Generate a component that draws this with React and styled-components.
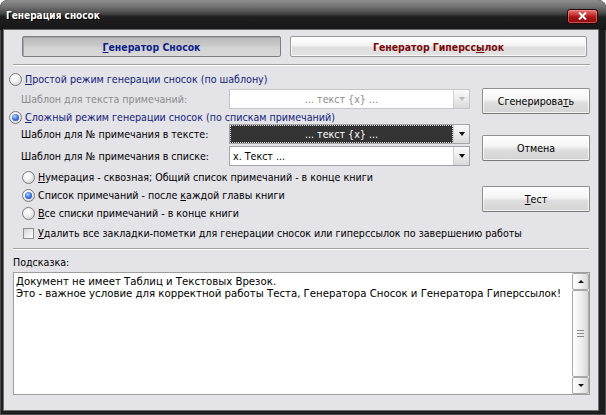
import React from 'react';
import styled, { createGlobalStyle } from 'styled-components';

const Global = createGlobalStyle`
  html, body { margin: 0; padding: 0; background: #ffffff; }
  body {
    font-family: "DejaVu Sans Condensed", "DejaVu Sans", "Liberation Sans", sans-serif;
    font-size: 10.6px;
    color: #000;
  }
  * { box-sizing: border-box; }
`;

const Window = styled.div`
  width: 606px;
  height: 415px;
  display: flex;
  flex-direction: column;
  background: #1d1d1d;
  border-radius: 8px 8px 0 0;
  overflow: hidden;
  box-shadow: inset 0 0 0 1px #4a4a4a;
`;

const TitleBar = styled.div`
  height: 30px;
  flex: none;
  display: flex;
  align-items: center;
  justify-content: space-between;
  padding: 0 8px 0 6px;
  background: linear-gradient(to bottom, #8e8e8e 0%, #727272 22%, #454545 45%, #1f1f1f 56%, #161616 100%);
`;

const TitleText = styled.div`
  color: #ffffff;
  font-weight: bold;
  font-size: 10px;
  text-shadow: 1px 1px 0 #000;
  margin-top: 1px;
`;

const CloseButton = styled.div`
  width: 31px;
  height: 15px;
  margin-top: 2px;
  border-radius: 3px;
  border: 1px solid #2a0000;
  background: linear-gradient(to bottom, #e77a7a 0%, #c93a3a 35%, #a81515 55%, #8e0d0d 100%);
  box-shadow: inset 0 0 0 1px rgba(255, 170, 170, 0.45);
  display: flex;
  align-items: center;
  justify-content: center;
`;

const Frame = styled.div`
  flex: 1;
  display: flex;
  padding: 0 8px 5px 4px;
`;

const Client = styled.div`
  flex: 1;
  display: flex;
  flex-direction: column;
  background: #e4e3e8;
  box-shadow: 0 0 0 1px #6c6c6c;
`;

const TopRow = styled.div`
  display: flex;
  gap: 9px;
  margin: 6px 0 0 18px;
`;

const TabButton = styled.div`
  width: ${p => p.$w}px;
  height: 21px;
  display: flex;
  align-items: center;
  justify-content: center;
  font-weight: bold;
  font-size: 10.4px;
  color: ${p => p.$color};
  border: 1px solid ${p => (p.$pressed ? '#7e7e7e' : '#9a9a9a')};
  border-radius: 2px;
  background: ${p =>
    p.$pressed
      ? 'linear-gradient(to bottom, #b9b9b9 0%, #c9c9c9 45%, #d3d3d3 55%, #d9d9d9 100%)'
      : 'linear-gradient(to bottom, #ffffff 0%, #f3f3f3 45%, #dedede 55%, #e3e3e3 100%)'};
  box-shadow: ${p => (p.$pressed ? 'inset 1px 1px 0 #a4a4a4' : 'inset 0 0 0 1px rgba(255,255,255,0.7)')};
`;

const Separator = styled.div`
  height: 2px;
  width: ${p => p.$w}px;
  margin: ${p => p.$mt}px 0 0 9px;
  border-top: 1px solid #a3a3a3;
  border-bottom: 1px solid #ffffff;
`;

const Main = styled.div`
  display: flex;
`;

const LeftCol = styled.div`
  width: 478px;
  display: flex;
  flex-direction: column;
`;

const RightCol = styled.div`
  width: 108px;
  display: flex;
  flex-direction: column;
`;

const RadioRow = styled.div`
  display: flex;
  align-items: center;
  height: ${p => p.$h}px;
  margin-top: ${p => p.$mt}px;
  padding-left: ${p => p.$pl}px;
  gap: 3px;
  color: ${p => p.$color || '#000'};
  white-space: nowrap;
`;

const RadioCircle = styled.span`
  width: 13px;
  height: 13px;
  flex: none;
  border-radius: 50%;
  border: 1px solid #7c7c7c;
  background: radial-gradient(circle at 40% 35%, #ffffff 0%, #f2f2f2 40%, #c4c4c4 100%);
  display: flex;
  align-items: center;
  justify-content: center;
  &::after {
    content: '';
    width: 7px;
    height: 7px;
    border-radius: 50%;
    background: radial-gradient(circle at 40% 35%, #b4d0ff 0%, #3d74da 50%, #1a43a6 100%);
    display: ${p => (p.$checked ? 'block' : 'none')};
  }
`;

const CheckBox = styled.span`
  width: 11px;
  height: 11px;
  flex: none;
  border: 1px solid #8e8e8e;
  background: linear-gradient(135deg, #d2d2d2 0%, #f4f4f4 70%, #ffffff 100%);
  margin-right: 1px;
`;

const Key = styled.span`
  text-decoration: underline;
  text-underline-offset: 1px;
`;

const FieldRow = styled.div`
  display: flex;
  align-items: center;
  height: 20px;
  margin-top: ${p => p.$mt}px;
  padding-left: 17px;
`;

const FieldLabel = styled.div`
  width: 208px;
  color: ${p => (p.$disabled ? '#8c8c8c' : '#000')};
  white-space: nowrap;
`;

const Combo = styled.div`
  width: 241px;
  height: 20px;
  display: flex;
  background: #ffffff;
  border: 1px solid ${p => (p.$disabled ? '#c6c6c6' : '#a4a4a4')};
`;

const ComboText = styled.div`
  flex: 1;
  display: flex;
  align-items: center;
  justify-content: ${p => (p.$left ? 'flex-start' : 'center')};
  padding-left: ${p => (p.$left ? '2px' : '0')};
  color: ${p => (p.$focused ? '#ffffff' : p.$disabled ? '#8c8c8c' : '#000')};
  background: ${p => (p.$focused ? '#343434' : 'transparent')};
  border: 1px ${p => (p.$focused ? 'dotted #d8d8d8' : 'solid transparent')};
  white-space: nowrap;
`;

const ComboArrow = styled.div`
  width: 16px;
  flex: none;
  display: flex;
  align-items: center;
  justify-content: center;
  border-left: 1px solid #d0d0d0;
  background: linear-gradient(to bottom, #fafafa 0%, #ececec 50%, #d9d9d9 100%);
  &::after {
    content: '';
    border-left: 3.5px solid transparent;
    border-right: 3.5px solid transparent;
    border-top: 4px solid ${p => (p.$disabled ? '#b9b9b9' : '#111')};
  }
`;

const Button = styled.div`
  width: 108px;
  height: 26px;
  margin-top: ${p => p.$mt}px;
  display: flex;
  align-items: center;
  justify-content: center;
  border: 1px solid #8f8f8f;
  border-bottom-color: #7a7a7a;
  border-radius: 2px;
  background: linear-gradient(to bottom, #ffffff 0%, #f5f5f5 42%, #dedede 58%, #d4d4d4 100%);
  box-shadow: inset 0 0 0 1px rgba(255, 255, 255, 0.7);
  color: #000;
`;

const HintLabel = styled.div`
  height: 13px;
  line-height: 13px;
  margin-top: 6px;
  padding-left: 9px;
`;

const Memo = styled.div`
  width: 577px;
  height: 123px;
  margin: 3px 0 0 9px;
  display: flex;
  background: #ffffff;
  border: 1px solid #9d9d9d;
`;

const MemoText = styled.div`
  flex: 1;
  padding: 3px 0 0 2px;
  font-size: 11.3px;
  line-height: 12px;
  white-space: nowrap;
  overflow: hidden;
`;

const ScrollBar = styled.div`
  width: 17px;
  display: flex;
  flex-direction: column;
  background: #f0f0f0;
`;

const ScrollButton = styled.div`
  height: 17px;
  flex: none;
  display: flex;
  align-items: center;
  justify-content: center;
  border: 1px solid #a9a9a9;
  border-radius: 2px;
  background: linear-gradient(to right, #ffffff 0%, #ececec 60%, #d6d6d6 100%);
  &::after {
    content: '';
    border-left: 3px solid transparent;
    border-right: 3px solid transparent;
    ${p => (p.$up ? 'border-bottom: 3px solid #111;' : 'border-top: 3px solid #111;')}
  }
`;

const ScrollThumb = styled.div`
  flex: 1;
  display: flex;
  flex-direction: column;
  align-items: center;
  justify-content: center;
  gap: 2px;
  border: 1px solid #a9a9a9;
  border-radius: 2px;
  background: linear-gradient(to right, #ffffff 0%, #ececec 60%, #d6d6d6 100%);
`;

const Grip = styled.span`
  width: 7px;
  height: 1px;
  background: #8a8a8a;
`;

export default function App() {
  return (
    <>
      <Global />
      <Window>
        <TitleBar>
          <TitleText>Генерация сносок</TitleText>
          <CloseButton>
            <svg width="9" height="8" viewBox="0 0 9 8">
              <path d="M1 0.5 L8 7.5 M8 0.5 L1 7.5" stroke="#ffffff" strokeWidth="2" />
            </svg>
          </CloseButton>
        </TitleBar>
        <Frame>
          <Client>
            <TopRow>
              <TabButton $w={259} $pressed $color="#0c1e8a">
                <Key>Г</Key>енератор Сносок
              </TabButton>
              <TabButton $w={297} $color="#7c0a0a">
                Генератор Гиперсс<Key>ы</Key>лок
              </TabButton>
            </TopRow>
            <Separator $w={577} $mt={7} />
            <Main>
              <LeftCol>
                <RadioRow $h={14} $mt={6} $pl={5} $color="#12237a">
                  <RadioCircle />
                  <span><Key>П</Key>ростой режим генерации сносок (по шаблону)</span>
                </RadioRow>
                <FieldRow $mt={3}>
                  <FieldLabel $disabled>Шаблон для текста примечаний:</FieldLabel>
                  <Combo $disabled>
                    <ComboText $disabled>... текст {'{x}'} ...</ComboText>
                    <ComboArrow $disabled />
                  </Combo>
                </FieldRow>
                <RadioRow $h={14} $mt={1} $pl={5} $color="#12237a">
                  <RadioCircle $checked />
                  <span><Key>С</Key>ложный режим генерации сносок (по спискам примечаний)</span>
                </RadioRow>
                <FieldRow $mt={0}>
                  <FieldLabel>Шаблон для № примечания в тексте:</FieldLabel>
                  <Combo>
                    <ComboText $focused>... текст {'{x}'} ...</ComboText>
                    <ComboArrow />
                  </Combo>
                </FieldRow>
                <FieldRow $mt={2}>
                  <FieldLabel>Шаблон для № примечания в списке:</FieldLabel>
                  <Combo>
                    <ComboText $left>x. Текст ...</ComboText>
                    <ComboArrow />
                  </Combo>
                </FieldRow>
                <RadioRow $h={18} $mt={2} $pl={18}>
                  <RadioCircle />
                  <span><Key>Н</Key>умерация - сквозная; Общий список примечаний - в конце книги</span>
                </RadioRow>
                <RadioRow $h={18} $mt={0} $pl={18}>
                  <RadioCircle $checked />
                  <span>Список примечаний - после <Key>к</Key>аждой главы книги</span>
                </RadioRow>
                <RadioRow $h={18} $mt={0} $pl={18}>
                  <RadioCircle />
                  <span><Key>В</Key>се списки примечаний - в конце книги</span>
                </RadioRow>
                <RadioRow $h={14} $mt={4} $pl={19}>
                  <CheckBox />
                  <span><Key>У</Key>далить все закладки-пометки для генерации сносок или гиперссылок по завершению работы</span>
                </RadioRow>
              </LeftCol>
              <RightCol>
                <Button $mt={22}>Сгенерирова<Key>т</Key>ь</Button>
                <Button $mt={21}>Отмена</Button>
                <Button $mt={25}><Key>Т</Key>ест</Button>
              </RightCol>
            </Main>
            <Separator $w={576} $mt={8} />
            <HintLabel>Подсказка:</HintLabel>
            <Memo>
              <MemoText>
                <div>Документ не имеет Таблиц и Текстовых Врезок.</div>
                <div>Это - важное условие для корректной работы Теста, Генератора Сносок и Генератора Гиперссылок!</div>
              </MemoText>
              <ScrollBar>
                <ScrollButton $up />
                <ScrollThumb>
                  <Grip />
                  <Grip />
                  <Grip />
                </ScrollThumb>
                <ScrollButton />
              </ScrollBar>
            </Memo>
          </Client>
        </Frame>
      </Window>
    </>
  );
}
